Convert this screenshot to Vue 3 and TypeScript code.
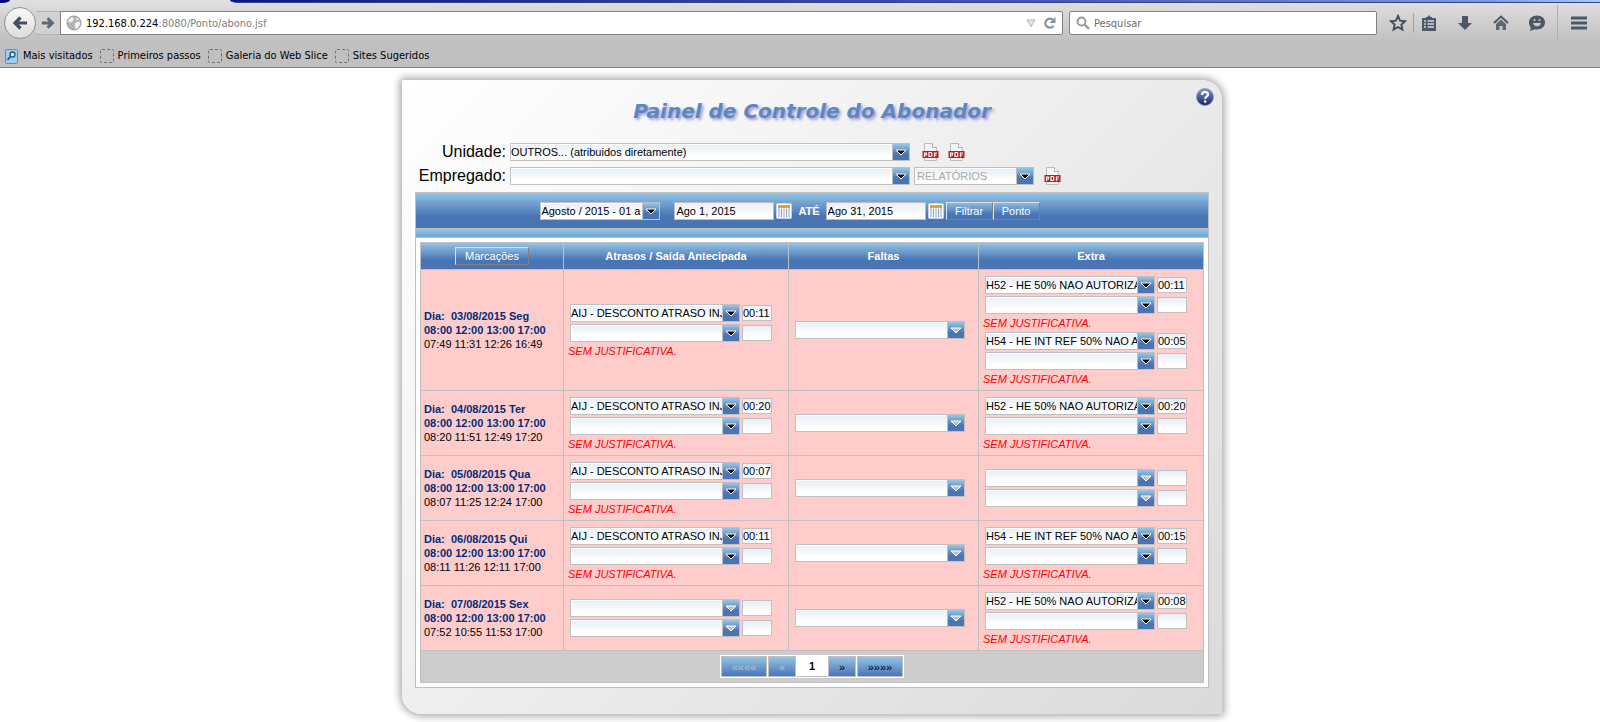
<script setup lang="ts">
import { ref } from 'vue'

interface Entry {
  code: string
  time: string
}
interface Group {
  entries: Entry[]
  note: boolean
  disabled: boolean
}
interface DayRow {
  day: string
  expected: string
  actual: string
  late: Group[]
  extra: Group[]
}

const AIJ = 'AIJ - DESCONTO ATRASO INJUSTIFICADO'
const H52 = 'H52 - HE 50% NAO AUTORIZADA'
const H54 = 'H54 - HE INT REF 50% NAO AUTORIZADA'

const filled = (code: string, time: string): Group => ({
  entries: [{ code, time }, { code: '', time: '' }],
  note: true,
  disabled: false,
})
const blank = (): Group => ({
  entries: [{ code: '', time: '' }, { code: '', time: '' }],
  note: false,
  disabled: true,
})

const schedule = '08:00 12:00 13:00 17:00'
const rows = ref<DayRow[]>([
  { day: '03/08/2015 Seg', expected: schedule, actual: '07:49 11:31 12:26 16:49', late: [filled(AIJ, '00:11')], extra: [filled(H52, '00:11'), filled(H54, '00:05')] },
  { day: '04/08/2015 Ter', expected: schedule, actual: '08:20 11:51 12:49 17:20', late: [filled(AIJ, '00:20')], extra: [filled(H52, '00:20')] },
  { day: '05/08/2015 Qua', expected: schedule, actual: '08:07 11:25 12:24 17:00', late: [filled(AIJ, '00:07')], extra: [blank()] },
  { day: '06/08/2015 Qui', expected: schedule, actual: '08:11 11:26 12:11 17:00', late: [filled(AIJ, '00:11')], extra: [filled(H54, '00:15')] },
  { day: '07/08/2015 Sex', expected: schedule, actual: '07:52 10:55 11:53 17:00', late: [blank()], extra: [filled(H52, '00:08')] },
])

const groupsOf = (row: DayRow) => [
  { key: 'late', title: 'Atrasos', groups: row.late },
  { key: 'absence', title: 'Faltas', groups: [] as Group[] },
  { key: 'extra', title: 'Extra', groups: row.extra },
]

const bookmarks = ['Primeiros passos', 'Galeria do Web Slice', 'Sites Sugeridos']
const dateFrom = ref('Ago 1, 2015')
const dateTo = ref('Ago 31, 2015')
const search = ref('')
</script>

<template>
  <div class="page">
    <header class="chrome">
      <div class="tabstrip">
        <span class="tab-before"></span>
        <span class="tab-gap"></span>
        <span class="tab-after"></span>
      </div>
      <div class="navbar">
        <button class="back" type="button" aria-label="Voltar">
          <svg width="16" height="16" viewBox="0 0 16 16"><path d="M8.5 2.5 3 8l5.500 5.500M3.500 8H15" fill="none" stroke="#46505c" stroke-width="3.200" /></svg>
        </button>
        <button class="forward" type="button" aria-label="Avançar">
          <svg width="14" height="14" viewBox="0 0 16 16"><path d="M7.500 2.500 13 8l-5.500 5.500M12.500 8H1" fill="none" stroke="#5c6878" stroke-width="3.400" /></svg>
        </button>
        <div class="urlbar">
          <svg class="globe" width="16" height="16" viewBox="0 0 16 16">
            <circle cx="8" cy="8" r="7" fill="#b4b4b4" />
            <path d="M3 3.500 6 2l2 1.500L7 6 4.500 7.500 2 7zM9 8l4-1.500 1.500 2L12 13l-2.500 1L9 11zM10 2l3 2-2 1.500z" fill="#f2f2f2" />
            <circle cx="8" cy="8" r="7" fill="none" stroke="#989898" />
          </svg>
          <span class="address"><b>192.168.0.224</b>:8080/Ponto/abono.jsf</span>
          <svg class="dropmark" width="10" height="9" viewBox="0 0 10 9"><path d="M1 1h8L5 7.500z" fill="#e4e8ec" stroke="#a8b0b8" /></svg>
          <svg width="14" height="14" viewBox="0 0 14 14"><path d="M10.500 9.800A4.500 4.500 0 1 1 10 4" fill="none" stroke="#8593a3" stroke-width="2.200" /><path d="M12.500 1v6h-6z" fill="#8593a3" /></svg>
        </div>
        <label class="searchbar">
          <svg width="14" height="14" viewBox="0 0 14 14"><circle cx="5.500" cy="5.500" r="4" fill="none" stroke="#969696" stroke-width="1.800" /><path d="m8.500 8.500 4.500 4.500" stroke="#969696" stroke-width="2.400" /></svg>
          <input v-model="search" type="text" placeholder="Pesquisar" aria-label="Pesquisar" />
        </label>
        <div class="tools">
          <button type="button" aria-label="Favoritar">
            <svg width="18" height="18" viewBox="0 0 18 18"><path d="m9 2 2.100 4.700 5 .5-3.700 3.400 1 5L9 13l-4.400 2.600 1-5L1.900 7.200l5-.5z" fill="none" stroke="#424d5b" stroke-width="1.900" /></svg>
          </button>
          <span class="rule"></span>
          <button type="button" aria-label="Favoritos">
            <svg width="18" height="18" viewBox="0 0 18 18"><path d="M6 3h1.500L9 1l1.500 2H12v2H6zM2 4h14v13H2z" fill="#4c5866" /><path d="M4 7h2m1.500 0H14M4 10h2m1.500 0H14M4 13h2m1.500 0H14" stroke="#d4d7da" stroke-width="1.500" /></svg>
          </button>
          <button type="button" aria-label="Downloads">
            <svg width="18" height="18" viewBox="0 0 18 18"><path d="M6 2h6v7h4l-7 7-7-7h4z" fill="#4c5866" /></svg>
          </button>
          <button type="button" aria-label="Página inicial">
            <svg width="18" height="18" viewBox="0 0 18 18"><path d="m2 9 7-6.500L16 9" fill="none" stroke="#4c5866" stroke-width="2" /><path d="m4 10 5-4.500 5 4.500v6h-3.500v-4h-3v4H4z" fill="#5c6877" /></svg>
          </button>
          <button type="button" aria-label="Conversa">
            <svg width="18" height="18" viewBox="0 0 18 18"><path d="M9 1.500c4.700 0 8 2.900 8 7s-3.300 7-8 7c-.8 0-1.600 0-2.300-.3L2 17l.8-3.500C1.500 12.200 1 10.500 1 8.500c0-4.100 3.300-7 8-7z" fill="#4c5866" /><path d="M5 9h8c-.5 2.200-2 3.300-4 3.300S5.500 11.200 5 9z" fill="#c9ccd0" /><circle cx="6.500" cy="6" r="1.100" fill="#c9ccd0" /><circle cx="11.500" cy="6" r="1.100" fill="#c9ccd0" /></svg>
          </button>
        </div>
        <button class="menu" type="button" aria-label="Menu">
          <svg width="16" height="14" viewBox="0 0 16 14"><path d="M0 2h16M0 7h16M0 12h16" stroke="#4c5866" stroke-width="3" /></svg>
        </button>
      </div>
      <nav class="bookmarks">
        <a href="#">
          <svg width="14" height="15" viewBox="0 0 14 15"><rect x=".5" y=".5" width="12" height="14" rx="1" fill="#9fcdea" stroke="#4d8fc0" /><circle cx="7.500" cy="5.500" r="2.500" fill="#d9effb" stroke="#1e5687" stroke-width="1.300" /><path d="M5.500 7.500 2.500 11" stroke="#1e5687" stroke-width="1.800" /></svg>
          Mais visitados
        </a>
        <a v-for="name in bookmarks" :key="name" href="#"><span class="dotted"></span>{{ name }}</a>
      </nav>
    </header>

    <main class="content">
      <section class="panel">
        <button class="help" type="button" aria-label="Ajuda">
          <svg width="18" height="18" viewBox="0 0 18 18">
            <defs><linearGradient id="help" x1="0" y1="0" x2="0" y2="1"><stop offset="0" stop-color="#8098e0" /><stop offset="1" stop-color="#142458" /></linearGradient></defs>
            <circle cx="9" cy="9" r="8.500" fill="url(#help)" stroke="#8c96b4" stroke-width=".8" />
            <path d="M6 7c0-2 1.300-3 3-3s3 .9 3 2.500C12 8.500 9.200 8.500 9.200 11" fill="none" stroke="#fff" stroke-width="2.200" /><circle cx="9.200" cy="13.600" r="1.300" fill="#fff" />
          </svg>
        </button>
        <h1>Painel de Controle do Abonador</h1>

        <div class="field">
          <label for="unit">Unidade:</label>
          <span class="combo wide">
            <select id="unit"><option>OUTROS... (atribuidos diretamente)</option></select>
            <svg class="arrow" width="16" height="16" viewBox="0 0 16 16"><path d="M3 6h10l-5 5z" /></svg>
          </span>
          <span class="pdfs">
            <button v-for="n in 2" :key="n" class="pdf" type="button" aria-label="PDF">
              <svg width="17" height="18" viewBox="0 0 17 18"><path d="M2.500.5h8l4 4v13h-12z" fill="#f4f4f4" stroke="#bcbcbc" /><path d="M10.500.5v4h4" fill="#fff" stroke="#aaa" /><path d="M.5 8h16v7H.5z" fill="#d01414" /><path d="M2.500 14v-4h2v2h-2M7 9.500v4h2l.8-.8v-2.400L9 9.500zM12.500 14v-4H15m-2.500 2h2" fill="none" stroke="#fff" stroke-width="1.200" /></svg>
            </button>
          </span>
        </div>
        <div class="field">
          <label for="employee">Empregado:</label>
          <span class="combo wide">
            <select id="employee"><option></option></select>
            <svg class="arrow" width="16" height="16" viewBox="0 0 16 16"><path d="M3 6h10l-5 5z" /></svg>
          </span>
          <span class="combo short hint">
            <select aria-label="Relatórios"><option>RELATÓRIOS</option></select>
            <svg class="arrow" width="16" height="16" viewBox="0 0 16 16"><path d="M3 6h10l-5 5z" /></svg>
          </span>
          <span class="pdfs near">
            <button class="pdf" type="button" aria-label="PDF">
              <svg width="17" height="18" viewBox="0 0 17 18"><path d="M2.500.5h8l4 4v13h-12z" fill="#f4f4f4" stroke="#bcbcbc" /><path d="M10.500.5v4h4" fill="#fff" stroke="#aaa" /><path d="M.5 8h16v7H.5z" fill="#d01414" /><path d="M2.500 14v-4h2v2h-2M7 9.500v4h2l.8-.8v-2.400L9 9.500zM12.500 14v-4H15m-2.500 2h2" fill="none" stroke="#fff" stroke-width="1.200" /></svg>
            </button>
          </span>
        </div>

        <div class="box">
          <div class="filter">
            <span class="combo short">
              <select aria-label="Período"><option>Agosto / 2015 - 01 a 31</option></select>
              <svg class="arrow" width="16" height="16" viewBox="0 0 16 16"><path d="M3 6h10l-5 5z" /></svg>
            </span>
            <span class="date">
              <input v-model="dateFrom" type="text" aria-label="Data inicial" />
              <button type="button" aria-label="Calendário inicial">
                <svg width="16" height="16" viewBox="0 0 16 16"><rect x=".5" y=".5" width="15" height="15" rx="1" fill="#f8fbff" stroke="#c2d6ee" /><path d="M2 2h12v3H2z" fill="#f0a020" /><path d="M3 5v9M5.500 6v8M8 6v8M10.500 6v8M13 5v9" stroke="#8aa4c4" /></svg>
              </button>
            </span>
            <strong>ATÉ</strong>
            <span class="date">
              <input v-model="dateTo" type="text" aria-label="Data final" />
              <button type="button" aria-label="Calendário final">
                <svg width="16" height="16" viewBox="0 0 16 16"><rect x=".5" y=".5" width="15" height="15" rx="1" fill="#f8fbff" stroke="#c2d6ee" /><path d="M2 2h12v3H2z" fill="#f0a020" /><path d="M3 5v9M5.500 6v8M8 6v8M10.500 6v8M13 5v9" stroke="#8aa4c4" /></svg>
              </button>
            </span>
            <span class="actions">
              <button class="raised" type="button">Filtrar</button>
              <button class="raised" type="button">Ponto</button>
            </span>
          </div>
          <div class="strip"></div>
          <div class="sheet">
            <table>
              <colgroup><col class="c-marks" /><col class="c-late" /><col class="c-absence" /><col /></colgroup>
              <thead>
                <tr>
                  <th scope="col"><button class="raised marks" type="button">Marcações</button></th>
                  <th scope="col">Atrasos / Saída Antecipada</th>
                  <th scope="col">Faltas</th>
                  <th scope="col">Extra</th>
                </tr>
              </thead>
              <tbody>
                <tr v-for="row in rows" :key="row.day">
                  <td class="day">
                    <b>Dia:&nbsp; {{ row.day }}</b>
                    <b>{{ row.expected }}</b>
                    <span>{{ row.actual }}</span>
                  </td>
                  <td v-for="cell in groupsOf(row)" :key="cell.key">
                    <div v-if="cell.key === 'absence'" class="group">
                      <span class="combo code off">
                        <select disabled :aria-label="cell.title + ' ' + row.day"><option></option></select>
                        <svg class="arrow" width="16" height="16" viewBox="0 0 16 16"><path d="M3 6h10l-5 5z" /></svg>
                      </span>
                    </div>
                    <div v-for="(group, g) in cell.groups" :key="g" class="group">
                      <div v-for="(entry, e) in group.entries" :key="e" class="entry">
                        <span class="combo code" :class="{ off: group.disabled }">
                          <select :disabled="group.disabled" :aria-label="cell.title + ' ' + row.day"><option>{{ entry.code }}</option></select>
                          <svg class="arrow" width="16" height="16" viewBox="0 0 16 16"><path d="M3 6h10l-5 5z" /></svg>
                        </span>
                        <input v-model="entry.time" class="time" type="text" :disabled="group.disabled" :aria-label="'Horas ' + cell.title + ' ' + row.day" />
                      </div>
                      <em v-if="group.note">SEM JUSTIFICATIVA.</em>
                    </div>
                  </td>
                </tr>
              </tbody>
              <tfoot>
                <tr>
                  <td colspan="4">
                    <div class="pager">
                      <button type="button" class="far" disabled>««««</button>
                      <button type="button" disabled>«</button>
                      <span>1</span>
                      <button type="button">»</button>
                      <button type="button" class="far">»»»»</button>
                    </div>
                  </td>
                </tr>
              </tfoot>
            </table>
          </div>
        </div>
      </section>
    </main>
  </div>
</template>

<style>
html,
body {
  background: #fff;
}
</style>

<style scoped>
.page,
.page * {
  box-sizing: border-box;
}
.page {
  font: 11px/14px "Liberation Sans", Arial, sans-serif;
  color: #000;
}
button {
  padding: 0;
  border: 0;
  background: none;
  font: inherit;
  color: inherit;
  cursor: pointer;
}
svg {
  display: block;
}
input,
select {
  margin: 0;
  font: inherit;
  color: #000;
  opacity: 1;
}

/* browser chrome */
.chrome {
  height: 68px;
  border-bottom: 1px solid #808080;
  background: linear-gradient(#e0e0e0, #c0c0c0 42px);
  font-family: "DejaVu Sans Condensed", "Noto Sans", sans-serif;
}
.tabstrip {
  display: flex;
  height: 3px;
}
.tab-before {
  width: 10px;
  background: #000080;
  border-bottom-right-radius: 8px 3px;
}
.tab-gap {
  width: 220px;
}
.tab-after {
  flex: 1;
  border-bottom: 1px solid #33448c;
  border-bottom-left-radius: 8px 3px;
  background: linear-gradient(90deg, #10148a, #4558b4 60%, #7c9cd8 92%, #a6caf0);
}
.navbar {
  display: flex;
  align-items: center;
  height: 40px;
  padding-left: 4px;
}
.back {
  display: grid;
  place-items: center;
  width: 32px;
  height: 32px;
  border: 1px solid #8e9399;
  border-radius: 50%;
  background: linear-gradient(#fafafa, #dcdcdc);
}
.forward {
  display: grid;
  place-items: center;
  width: 24px;
  height: 24px;
  border: solid #b0b0b0;
  border-width: 1px 0;
  background: #d2d2d2;
}
.urlbar,
.searchbar {
  display: flex;
  align-items: center;
  height: 24px;
  border: 1px solid #808080;
  background: #fff;
}
.urlbar {
  flex: 1;
  min-width: 0;
  padding: 0 5px;
  border-radius: 0 2px 2px 0;
}
.address {
  flex: 1;
  margin-left: 4px;
  padding-top: 2px;
  color: #808080;
}
.address b {
  font-weight: 400;
  color: #000;
}
.dropmark {
  margin-right: 7px;
}
.searchbar {
  width: 308px;
  margin-left: 6px;
  padding: 0 6px;
  gap: 4px;
  border-radius: 2px;
}
.searchbar input {
  flex: 1;
  min-width: 0;
  padding: 2px 0 0;
  border: 0;
  outline: 0;
}
.searchbar input::placeholder {
  color: #6d6d6d;
  opacity: 1;
}
.tools {
  display: flex;
  align-items: center;
  gap: 18px;
  margin: 0 11px 0 12px;
}
.rule {
  width: 1px;
  height: 20px;
  margin: 0 -12px;
  background: #a4a4a4;
}
.menu {
  display: grid;
  place-items: center;
  width: 43px;
  height: 36px;
  border-left: 1px solid #b0b0b0;
}
.bookmarks {
  display: flex;
  align-items: center;
  height: 24px;
  padding: 2px 0 0 5px;
  gap: 7px;
}
.bookmarks a {
  display: flex;
  align-items: center;
  gap: 4px;
  color: #000;
  text-decoration: none;
}
.dotted {
  width: 14px;
  height: 14px;
  border: 1px dashed #707070;
  border-radius: 2px;
}

/* panel */
.content {
  padding: 12px 0 8px 24px;
}
.panel {
  position: relative;
  max-width: 820px;
  margin: 0 auto;
  padding: 19px 13px 26px;
  border-radius: 2px 20px 2px 20px;
  background: linear-gradient(135deg, #fff, #dadada);
  box-shadow: 0 0 7px 3px #b4b4b4;
}
.help {
  position: absolute;
  top: 8px;
  right: 8px;
}
h1 {
  margin: 0 0 20px;
  font: italic 700 20px/24px "DejaVu Sans", Verdana, sans-serif;
  text-align: center;
  color: #5c88c0;
  text-shadow: 2px 2px 3px #9a9ad8;
}
.field {
  display: flex;
  align-items: center;
  gap: 4px;
  height: 18px;
  margin-bottom: 6px;
}
.field label {
  width: 91px;
  font-size: 16px;
  line-height: 18px;
  text-align: right;
  white-space: nowrap;
}
.pdfs {
  display: flex;
  gap: 9px;
  margin-left: 8px;
}
.near {
  margin-left: 6px;
}
.combo {
  display: grid;
  grid-template-columns: 1fr 17px;
  height: 18px;
  border: 1px solid #c0c0c0;
  background: linear-gradient(#e6eef6, #fff 75%);
  box-shadow: inset 1px 1px #fff;
}
.combo select {
  grid-area: 1 / 1 / 2 / 3;
  width: 100%;
  min-width: 0;
  height: 16px;
  padding: 0 17px 0 0;
  border: 0;
  outline: 0;
  border-radius: 0;
  appearance: none;
  background: transparent;
}
.arrow {
  grid-area: 1 / 2;
  width: 17px;
  border-left: 1px solid #c0c0c0;
  background: linear-gradient(#96c8e8, #4a75b5 65%);
  pointer-events: none;
}
.arrow path {
  fill: #000;
  stroke: #fff;
}
.off .arrow path {
  fill: #c0c0c0;
}
.wide {
  width: 400px;
}
.short {
  width: 120px;
}
.code {
  width: 170px;
}
.hint select {
  padding-left: 2px;
  color: #a8a8a8;
}
.box {
  margin-top: 7px;
  border: 1px solid #c0c0c0;
  background: #fff;
}
.filter {
  display: flex;
  align-items: center;
  justify-content: center;
  height: 36px;
  padding-right: 44px;
  border-bottom: 1px solid #c0c0c0;
  background: linear-gradient(#92c4e6, #4a75b5 65%);
  color: #fff;
}
.date {
  display: flex;
  align-items: center;
  gap: 2px;
}
.date input {
  width: 100px;
  height: 18px;
  padding: 0 1px;
  border: 1px solid #c0c0c0;
  background: linear-gradient(#e6eef6, #fff 75%);
}
.filter > .short {
  margin-right: 14px;
}
.filter strong {
  margin: 0 6px;
}
.actions {
  display: flex;
  margin-left: 2px;
}
.raised {
  width: 47px;
  height: 18px;
  border: 1px solid;
  border-color: #e0e0e0 #808080 #808080 #e0e0e0;
  background: linear-gradient(#8abce2, #4a75b5 70%);
  color: #fff;
  line-height: 14px;
}
.marks {
  width: 74px;
  font-weight: 400;
}
.strip {
  height: 9px;
  border-bottom: 1px solid #c0c0c0;
  background: linear-gradient(#92c4e6, #70a4d4);
}
.sheet {
  padding: 4px;
}
table {
  width: 100%;
  table-layout: fixed;
  border-spacing: 0;
  border: solid #c0c0c0;
  border-width: 1px 0 0 1px;
}
.c-marks {
  width: 143px;
}
.c-late {
  width: 225px;
}
.c-absence {
  width: 190px;
}
th,
td {
  padding: 4px;
  border: solid #c0c0c0;
  border-width: 0 1px 1px 0;
  vertical-align: middle;
}
th {
  height: 27px;
  background: linear-gradient(#92c4e6, #4a75b5 65%);
  color: #fff;
}
tbody td {
  background: #ffcccc;
}
.day {
  padding: 4px 3px;
  white-space: nowrap;
}
.day b,
.day span {
  display: block;
}
.day b {
  color: #002c78;
}
.group {
  padding: 2px 0 0 2px;
}
.group:has(.off) {
  padding-bottom: 2px;
}
.entry {
  display: flex;
  align-items: center;
  gap: 2px;
}
.entry + .entry {
  margin-top: 2px;
}
.time {
  width: 30px;
  height: 16px;
  padding: 0;
  border: 1px solid #c0c0c0;
  background: linear-gradient(#e6eef6, #fff 75%);
}
em {
  display: block;
  margin: 2px 0 0 -2px;
  color: #f00;
}
tfoot td {
  background: #ccc;
}
.pager {
  display: flex;
  width: max-content;
  margin: 0 auto;
  padding: 1px;
  gap: 1px;
  background: #fff;
}
.pager button {
  width: 28px;
  height: 21px;
  border: 1px solid #c0c0c0;
  background: linear-gradient(#92c4e6, #4a75b5);
}
.pager button:disabled {
  color: #b8c4d0;
}
.pager .far {
  width: 46px;
}
.pager span {
  width: 30px;
  line-height: 20px;
  border-bottom: 1px solid #c0c0c0;
  font-weight: 700;
  text-align: center;
}
</style>
